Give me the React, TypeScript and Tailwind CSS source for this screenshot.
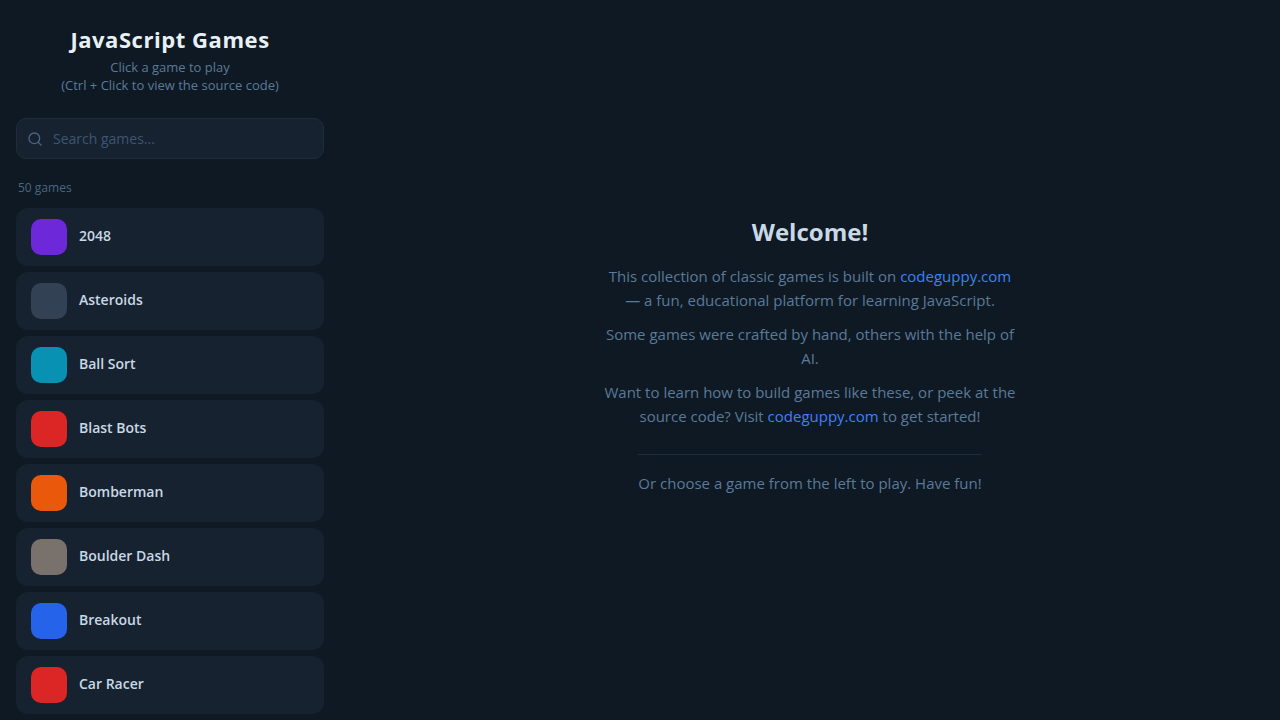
import { useState } from 'react';

type Game = { name: string; tile: string };

const TOTAL_GAMES = 50;

const GAMES: Game[] = [
  { name: '2048', tile: 'bg-[#6d28d9]' },
  { name: 'Asteroids', tile: 'bg-[#334155]' },
  { name: 'Ball Sort', tile: 'bg-[#0891b2]' },
  { name: 'Blast Bots', tile: 'bg-[#dc2626]' },
  { name: 'Bomberman', tile: 'bg-[#ea580c]' },
  { name: 'Boulder Dash', tile: 'bg-[#78716c]' },
  { name: 'Breakout', tile: 'bg-[#2563eb]' },
  { name: 'Car Racer', tile: 'bg-[#dc2626]' },
];

function SearchBox({ value, onChange }: { value: string; onChange: (v: string) => void }) {
  return (
    <label className="flex items-center gap-2.5 rounded-[10px] border border-[#1e2d3d] bg-[#172230] px-2.5 focus-within:border-[#3b82f6]">
      <svg
        viewBox="0 0 24 24"
        fill="none"
        stroke="currentColor"
        strokeWidth="2"
        strokeLinecap="round"
        strokeLinejoin="round"
        className="size-4 shrink-0 text-[#4a6580]"
        aria-hidden="true"
      >
        <circle cx="11" cy="11" r="8" />
        <path d="M21 21l-4.35-4.35" />
      </svg>
      <input
        type="text"
        aria-label="Search games"
        placeholder="Search games..."
        value={value}
        onChange={(e) => onChange(e.target.value)}
        className="min-w-0 flex-1 bg-transparent py-[9px] text-sm leading-[21px] text-[#c8d8e8] outline-none placeholder:text-[#3d5570]"
      />
    </label>
  );
}

function GameCard({ game }: { game: Game }) {
  return (
    <li>
      <button
        type="button"
        className="flex w-full cursor-pointer items-center gap-3 rounded-xl border border-transparent bg-[#172230] px-3.5 py-2.5 text-left hover:border-[#1e2d3d]"
      >
        <span className={`size-9 shrink-0 rounded-[10px] ${game.tile}`} />
        <span className="pb-0.5 text-sm font-semibold text-[#c8d8e4]">{game.name}</span>
      </button>
    </li>
  );
}

function SiteLink() {
  return (
    <a href="https://codeguppy.com" className="text-[#3b82f6] hover:underline">
      codeguppy.com
    </a>
  );
}

export default function App() {
  const [query, setQuery] = useState('');
  const visible = GAMES.filter((g) => g.name.toLowerCase().includes(query.trim().toLowerCase()));

  return (
    <div className="flex h-screen bg-[#0f1923] font-['Open_Sans','Noto_Sans',sans-serif] text-[#5a7a9a]">
      <aside className="flex w-[340px] shrink-0 flex-col overflow-hidden px-4">
        <header className="pt-6 pb-6 text-center">
          <h1 className="text-[22px] leading-[30px] font-bold tracking-wide text-[#e8f0f4]">JavaScript Games</h1>
          <p className="mt-1 text-[13px] leading-[18px]">
            Click a game to play
            <br />
            (Ctrl + Click to view the source code)
          </p>
        </header>
        <SearchBox value={query} onChange={setQuery} />
        <p className="mt-5 px-0.5 text-xs leading-[18px] text-[#4a6580]">{TOTAL_GAMES} games</p>
        <ul className="mt-[11px] flex min-h-0 flex-1 flex-col gap-1.5 overflow-y-auto">
          {visible.map((g) => (
            <GameCard key={g.name} game={g} />
          ))}
        </ul>
      </aside>

      <main className="flex min-w-0 flex-1 flex-col items-center justify-center pb-3 text-center">
        <h2 className="mb-3.5 text-2xl leading-9 font-bold text-[#c8d8e4]">Welcome!</h2>
        <div className="flex max-w-[420px] flex-col items-center gap-2.5 text-[15px] leading-6">
          <p>
            This collection of classic games is built on <SiteLink /> — a fun, educational platform for learning
            JavaScript.
          </p>
          <p>Some games were crafted by hand, others with the help of AI.</p>
          <p>
            Want to learn how to build games like these, or peek at the source code? Visit <SiteLink /> to get started!
          </p>
          <p className="mt-4 border-t border-[#1e2d3d] pt-4">Or choose a game from the left to play. Have fun!</p>
        </div>
      </main>
    </div>
  );
}
